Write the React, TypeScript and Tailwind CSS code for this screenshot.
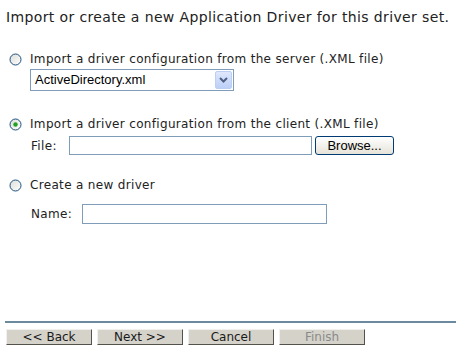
import type { ReactNode } from 'react'

const ui = '[font-family:"DejaVu_Sans",Verdana,sans-serif]'

function Radio({ checked }: { checked?: boolean }) {
  return (
    <svg width="13" height="13" viewBox="0 0 13 13" className="shrink-0">
      <defs>
        <linearGradient id={checked ? 'rg1' : 'rg0'} x1="0" y1="0" x2="1" y2="1">
          <stop offset="0" stopColor="#dcdcd6" />
          <stop offset="1" stopColor="#ffffff" />
        </linearGradient>
      </defs>
      <circle cx="6.5" cy="6.5" r="5.5" fill={`url(#${checked ? 'rg1' : 'rg0'})`} stroke="#1c5180" strokeWidth="1" />
      {checked ? <circle cx="6.5" cy="6.5" r="2.2" fill="#21a121" /> : null}
    </svg>
  )
}

function Option({ checked, children }: { checked?: boolean; children: ReactNode }) {
  return (
    <div className="flex items-center gap-[8px] pl-[9px]">
      <Radio checked={checked} />
      <span className="text-[12px] leading-[14px] tracking-[0.33px] text-[#222]">{children}</span>
    </div>
  )
}

function WizButton({ label, disabled }: { label: string; disabled?: boolean }) {
  return (
    <button
      type="button"
      className={`h-[16px] w-[86px] border-t border-l border-t-[#f2f0ec] border-l-[#f2f0ec] border-r border-b border-r-[#55524c] border-b-[#55524c] bg-[#d5d2ca] text-[12px] leading-[14px] ${
        disabled ? 'text-[#8a8a8a]' : 'text-[#1a1a1a]'
      }`}
    >
      {label}
    </button>
  )
}

export default function App() {
  return (
    <div className={`flex h-[351px] w-[456px] flex-col bg-white ${ui}`}>
      <div className="whitespace-nowrap px-[6px] pt-[9px] text-[14px] leading-[16px] tracking-[0.37px] text-[#222]">
        Import or create a new Application Driver for this driver set.
      </div>

      <div className="mt-[27px] flex flex-col">
        <Option>Import a driver configuration from the server (.XML file)</Option>
        <div className="ml-[30px] mt-[3px] flex h-[22px] w-[204px] items-center justify-between border border-[#7f9db9] bg-white pl-[4px] pr-[1px]">
          <span className="[font-family:'Liberation_Sans',Arial,sans-serif] text-[13px] text-black">ActiveDirectory.xml</span>
          <span className="flex h-[18px] w-[17px] items-center justify-center rounded-[2px] border border-[#bccff2] bg-gradient-to-b from-[#dfe8fc] to-[#bccff7]">
            <svg width="9" height="6" viewBox="0 0 9 6">
              <path d="M1 1 L4.5 4.5 L8 1" fill="none" stroke="#4d6185" strokeWidth="2" />
            </svg>
          </span>
        </div>
      </div>

      <div className="mt-[26px] flex flex-col">
        <Option checked>Import a driver configuration from the client (.XML file)</Option>
        <div className="mt-[5px] flex items-center">
          <span className="ml-[31px] w-[38px] text-[12px] tracking-[0.33px] text-[#222]">File:</span>
          <div className="h-[19px] w-[243px] border border-[#7f9db9] bg-white" />
          <button
            type="button"
            className="ml-[3px] h-[19px] w-[79px] rounded-[3px] border border-[#003c74] bg-gradient-to-b from-white to-[#e6e3d8] [font-family:'Liberation_Sans',Arial,sans-serif] text-[13px] leading-[16px] text-black"
          >
            Browse...
          </button>
        </div>
      </div>

      <div className="mt-[23px] flex flex-col">
        <Option>Create a new driver</Option>
        <div className="mt-[12px] flex items-center">
          <span className="ml-[31px] w-[51px] text-[12px] tracking-[0.33px] text-[#222]">Name:</span>
          <div className="h-[20px] w-[245px] border border-[#7f9db9] bg-white" />
        </div>
      </div>

      <div className="mt-auto mb-[6px] ml-[5px] flex flex-col">
        <div className="h-[2px] bg-[#6b8a9e]" />
        <div className="mt-[6px] flex gap-[5px] pl-[1px] [font-family:'DejaVu_Sans',Tahoma,sans-serif]">
          <WizButton label="<< Back" />
          <WizButton label="Next >>" />
          <WizButton label="Cancel" />
          <WizButton label="Finish" disabled />
        </div>
      </div>
    </div>
  )
}
